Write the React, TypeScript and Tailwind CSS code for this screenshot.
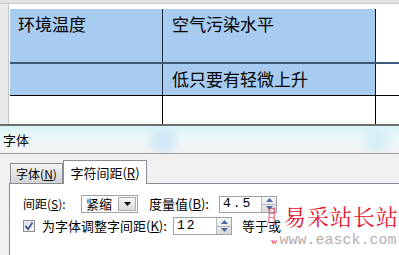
import React from "react";

const Spin = ({ value, w, h }: { value: string; w: string; h: string }) => (
  <div className={`flex ${w} ${h} bg-white border border-[#9da3ab]`}>
    <div className="flex-1 pl-[3px] flex items-center text-[13px] tracking-[2px] font-['Liberation_Mono',monospace] text-black">
      {value}
    </div>
    <div className="w-[15px] flex flex-col border-l border-[#b6b9bd] bg-gradient-to-b from-[#f7f7f7] to-[#d9d9d9]">
      <div className="flex-1 flex items-center justify-center border-b border-[#b6b9bd]">
        <svg width="7" height="4" viewBox="0 0 7 4"><path d="M0 4 L3.5 0 L7 4 Z" fill="#4b6aa6" /></svg>
      </div>
      <div className="flex-1 flex items-center justify-center">
        <svg width="7" height="4" viewBox="0 0 7 4"><path d="M0 0 L3.5 4 L7 0 Z" fill="#4b6aa6" /></svg>
      </div>
    </div>
  </div>
);

export default function App() {
  const blue = "bg-[#a7ccf0]";
  return (
    <div className="w-[399px] h-[255px] overflow-hidden relative bg-white flex flex-col font-['Noto_Sans_CJK_SC',sans-serif] text-black">
      {/* Document area */}
      <div className="h-[124px] flex flex-col shrink-0">
        <div className="h-[4px] bg-[#e2e2e2] border-b border-[#c9c9c9] shrink-0" />
        <div className="flex flex-1">
          <div className="w-[9px] bg-[#e9e9e9] border-r border-[#c4c4c4] shrink-0" />
          <div className="flex-1 flex flex-col pt-[5px] pl-[1px]">
            {/* row 1 */}
            <div className="flex h-[55px] border-b-2 border-[#3f5a78]">
              <div className={`w-[153px] ${blue} border-r border-[#1f2b3a] pl-[8px] pt-[3px] text-[17px] leading-[24px]`}>环境温度</div>
              <div className={`w-[213px] ${blue} border-r border-[#111] pl-[9px] pt-[3px] text-[17px] leading-[24px]`}>空气污染水平</div>
              <div className="flex-1 bg-white" />
            </div>
            {/* row 2 */}
            <div className="flex h-[32px] border-b border-black">
              <div className={`w-[153px] ${blue} border-r border-[#1f2b3a]`} />
              <div className={`w-[213px] ${blue} border-r border-[#111] pl-[9px] pt-[3px] text-[17px] leading-[24px]`}>低只要有轻微上升</div>
              <div className="flex-1 bg-white" />
            </div>
            {/* row 3 */}
            <div className="flex flex-1">
              <div className="w-[153px] border-r border-black" />
              <div className="w-[213px] border-r border-black" />
              <div className="flex-1" />
            </div>
          </div>
        </div>
      </div>

      {/* Dialog title bar */}
      <div className="h-[30px] shrink-0 relative border-t-2 border-[#6e6e6e] border-b border-b-[#9a9a9a] bg-gradient-to-b from-[#d9f4f7] via-[#eef8f9] to-[#f3f3f3] flex items-center pl-[3px] text-[13px] overflow-hidden">
        <div className="absolute left-[150px] top-[2px] w-[26px] h-[26px] rounded-full bg-[#c9e3f4] blur-[5px] opacity-80" />
        <div className="absolute left-[365px] top-[2px] w-[24px] h-[26px] rounded-full bg-[#d0ecf6] blur-[5px] opacity-80" />
        <span className="relative">字体</span>
      </div>

      {/* Dialog body */}
      <div className="flex-1 bg-[#f0f0f0] pt-[6px] pl-[9px] flex flex-col text-[12px]">
        <div className="flex items-end h-[23px] shrink-0 relative">
          <div className="ml-[1px] w-[53px] h-[20px] border border-b-0 border-[#898c95] bg-gradient-to-b from-[#f4f4f4] to-[#d3d3d3] flex items-center justify-center">
            字体(<span className="underline">N</span>)
          </div>
          <div className="w-[84px] h-[24px] -mb-[1px] border border-b-0 border-[#898c95] bg-white flex items-center justify-center text-[13px] relative z-10">
            字符间距(<span className="underline">R</span>)
          </div>
        </div>
        <div className="flex-1 bg-white border-l border-t border-[#898c95] pl-[13px] pt-[11px] flex flex-col gap-[4px]">
          {/* row 1 */}
          <div className="flex items-center h-[18px]">
            <span className="w-[58px]">间距(<span className="underline">S</span>):</span>
            <div className="w-[57px] h-[18px] border border-[#9da3ab] bg-white flex">
              <div className="flex-1 pl-[4px] flex items-center text-[13px]">紧缩</div>
              <div className="w-[18px] m-[1px] border border-[#a9abae] bg-gradient-to-b from-[#f6f6f6] to-[#dadada] flex items-center justify-center">
                <svg width="7" height="4" viewBox="0 0 7 4"><path d="M0 0 L3.5 4 L7 0 Z" fill="#000" /></svg>
              </div>
            </div>
            <span className="ml-[11px] w-[70px] text-[13px]">度量值(<span className="underline">B</span>):</span>
            <Spin value="4.5" w="w-[58px]" h="h-[17px]" />
          </div>
          {/* row 2 */}
          <div className="flex items-center h-[18px]">
            <div className="w-[12px] h-[12px] border border-[#8e8f8f] bg-gradient-to-br from-[#dfe3ea] to-[#f7f8fa] flex items-center justify-center">
              <svg width="10" height="10" viewBox="0 0 10 10"><path d="M1.5 5 L4 8 L8.5 1.5" stroke="#4a5f9c" strokeWidth="2" fill="none" /></svg>
            </div>
            <span className="ml-[7px] w-[131px] text-[13px]">为字体调整字间距(<span className="underline">K</span>):</span>
            <Spin value="12" w="w-[59px]" h="h-[18px]" />
            <span className="ml-[10px] text-[13px]">等于或</span>
          </div>
        </div>
      </div>

      {/* Watermark */}
      <div className="absolute left-[266px] top-[204px] flex items-start whitespace-nowrap text-[#e8102a] font-['Noto_Serif_CJK_SC','Noto_Sans_CJK_SC',serif]">
        <span className="inline-block w-[13px] text-[20px] leading-[24px] scale-x-[0.55] origin-left">月</span>
        <span className="ml-[5px] text-[22px] leading-[24px] tracking-[1px]">易采站长站</span>
      </div>
      <div className="absolute left-[271px] top-[233px] flex items-baseline whitespace-nowrap">
        <span className="text-[9px] text-[#e8102a] font-['Liberation_Serif',serif] mr-[2px]">w</span>
        <span className="text-[15px] leading-[16px] text-[#b7adae] font-['Liberation_Mono',monospace]">www.easck.com</span>
      </div>
    </div>
  );
}
